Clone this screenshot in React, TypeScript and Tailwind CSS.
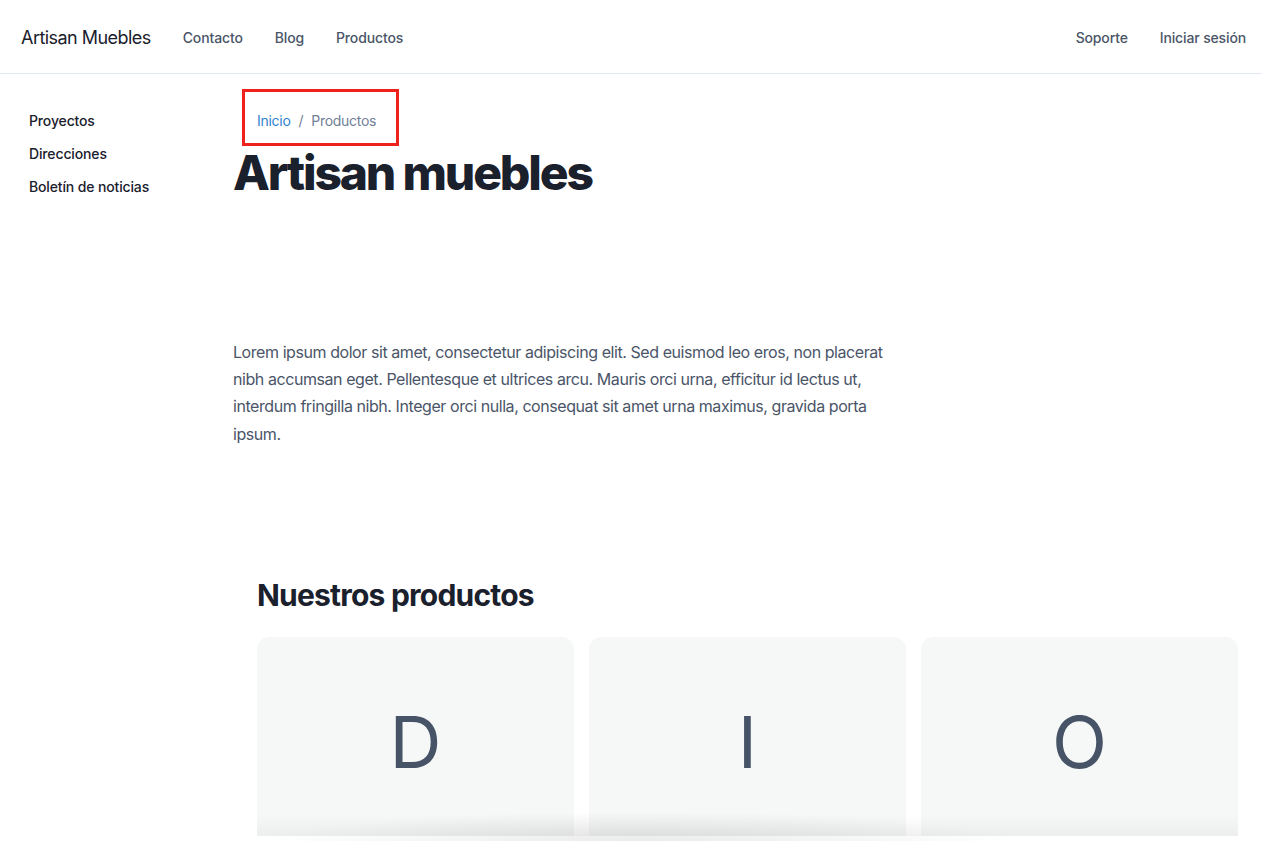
import React from 'react';

const navLinks = ['Contacto', 'Blog', 'Productos'];
const sideLinks = ['Proyectos', 'Direcciones', 'Boletín de noticias'];
const products = ['D', 'I', 'O'];

const App: React.FC = () => {
  return (
    <div
      className="relative h-[841px] overflow-hidden bg-white text-[#1a202c]"
      style={{ fontFamily: 'Inter, "Noto Sans", sans-serif' }}
    >
      {/* Top navigation */}
      <header className="flex h-[74px] items-center justify-between border-b border-[#e2e8f0] pl-[21px] pr-4 pt-[3px]">
        <div className="flex items-center gap-8">
          <span className="text-lg tracking-[-0.03em] text-[#1a202c]">Artisan Muebles</span>
          <nav className="flex items-center gap-8">
            {navLinks.map(link => (
              <a key={link} className="text-sm font-medium tracking-[-0.01em] text-[#4a5568]">
                {link}
              </a>
            ))}
          </nav>
        </div>
        <div className="flex items-center gap-8">
          <a className="text-sm font-medium tracking-[-0.01em] text-[#4a5568]">Soporte</a>
          <a className="text-sm font-medium tracking-[-0.01em] text-[#4a5568]">Iniciar sesión</a>
        </div>
      </header>

      <div className="flex">
        {/* Sidebar */}
        <aside className="w-[233px] shrink-0 pl-[29px] pt-[30px]">
          {sideLinks.map(link => (
            <div key={link} className="flex h-[33px] items-center text-sm font-medium tracking-[-0.01em] text-[#1a202c]">
              {link}
            </div>
          ))}
        </aside>

        {/* Main content */}
        <main className="flex-1">
          <div className="ml-[9px] mt-[15px] flex h-[57px] w-[157px] items-center gap-2 border-[3px] border-[#f0201a] px-3 pt-[6px] text-sm tracking-[-0.02em]">
            <a className="text-[#3182ce]">Inicio</a>
            <span className="text-[#718096]">/</span>
            <span className="text-[#718096]">Productos</span>
          </div>

          <h1 className="mt-[3px] text-5xl leading-none font-extrabold tracking-[-0.045em] text-[#1a202c]">
            Artisan muebles
          </h1>

          <p className="mt-[142px] max-w-[660px] text-base leading-[1.7] tracking-[-0.027em] text-[#4a5568]">
            Lorem ipsum dolor sit amet, consectetur adipiscing elit. Sed euismod leo eros, non placerat
            nibh accumsan eget. Pellentesque et ultrices arcu. Mauris orci urna, efficitur id lectus ut,
            interdum fringilla nibh. Integer orci nulla, consequat sit amet urna maximus, gravida porta
            ipsum.
          </p>

          <section className="mt-[132px] pl-6 pr-6">
            <h2 className="text-3xl leading-none font-bold tracking-[-0.026em] text-[#1a202c]">Nuestros productos</h2>
            <div className="relative mt-[27px] h-[199px] overflow-hidden">
              <div className="grid grid-cols-3 gap-[15px]">
                {products.map(letter => (
                  <div
                    key={letter}
                    className="flex h-[210px] items-center justify-center rounded-xl bg-[#f6f8f8]"
                  >
                    <span className="text-7xl font-normal text-[#475366]">{letter}</span>
                  </div>
                ))}
              </div>
              <div className="pointer-events-none absolute inset-x-0 bottom-0 h-[22px] bg-gradient-to-b from-transparent to-[rgba(0,0,0,0.04)]" />
            </div>
          </section>
        </main>
      </div>

      {/* soft shadow at the bottom edge */}
      <div className="pointer-events-none absolute bottom-0 left-[260px] h-[30px] w-[760px] bg-[radial-gradient(ellipse_at_bottom,rgba(0,0,0,0.08),transparent_70%)]" />
    </div>
  );
};

export default App;
